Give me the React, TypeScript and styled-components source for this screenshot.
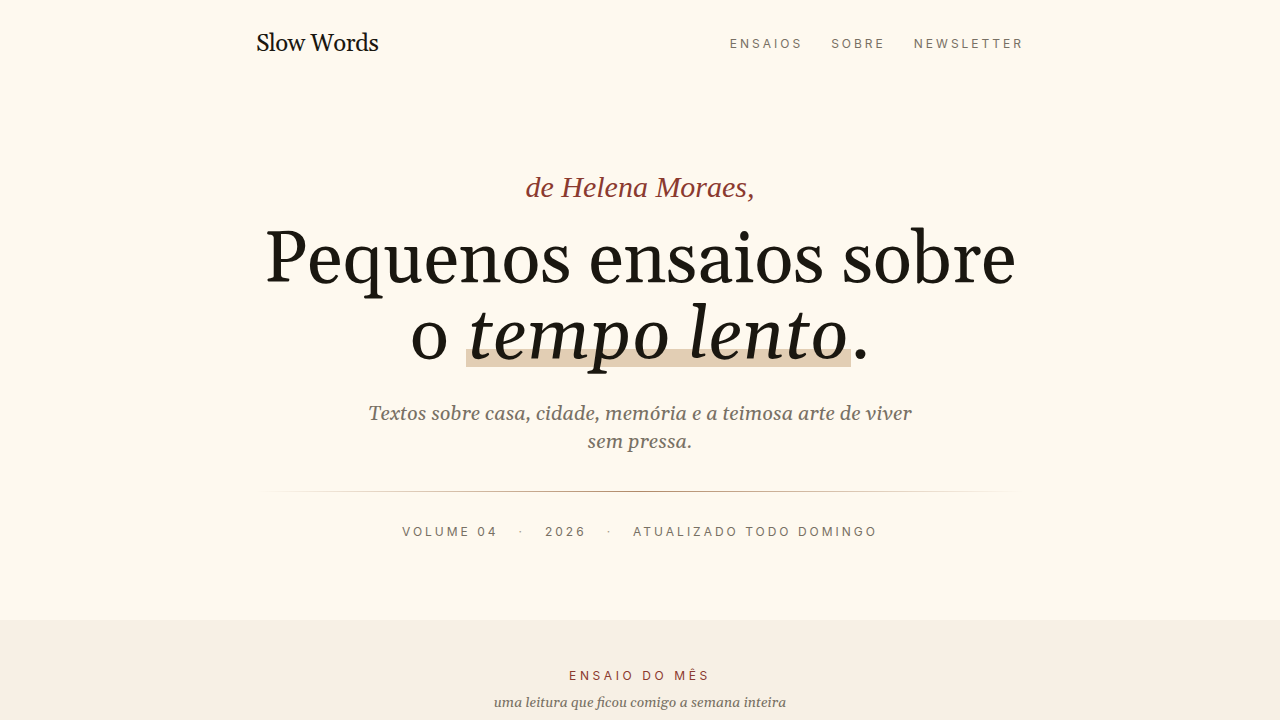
import React from 'react';
import styled, { createGlobalStyle } from 'styled-components';

const serif = `Georgia, Gelasio, "Liberation Serif", serif`;
const sans = `Inter, "Liberation Sans", sans-serif`;
const ink = '#1a1710';
const muted = '#787064';
const accent = '#8b3a2f';

const GlobalStyle = createGlobalStyle`
  * { box-sizing: border-box; }
  body { margin: 0; background: #fef9ef; color: ${ink}; font-family: ${serif}; }
`;

const Header = styled.header`
  display: flex;
  justify-content: space-between;
  align-items: center;
  max-width: 768px;
  margin: 0 auto;
  padding: 28px 0;
`;

const Brand = styled.a`
  font-size: 24px;
  line-height: 32px;
  letter-spacing: -0.02em;
  color: ${ink};
  text-decoration: none;
`;

const Nav = styled.nav`
  display: flex;
  gap: 28px;
`;

const NavLink = styled.a`
  font: 400 12px/16px ${sans};
  letter-spacing: 0.25em;
  text-transform: uppercase;
  color: ${muted};
  text-decoration: none;
`;

const Hero = styled.section`
  max-width: 768px;
  margin: 0 auto;
  padding: 75px 0 80px;
  text-align: center;
`;

const Byline = styled.p`
  margin: 0 0 12px;
  font: italic 400 30px/48px "Apple Chancery", "Zapf Chancery", "Liberation Serif", serif;
  color: ${accent};
`;

const Title = styled.h1`
  margin: 0;
  font-weight: 400;
  font-size: 72px;
  line-height: 76px;
`;

const Marked = styled.em`
  padding: 0 2px;
  background: linear-gradient(transparent 58px, #e2ceb4 58px, #e2ceb4 76px, transparent 76px);
`;

const Lead = styled.p`
  max-width: 576px;
  margin: 25px auto 35px;
  font-size: 20px;
  line-height: 28px;
  font-style: italic;
  color: ${muted};
`;

const Rule = styled.hr`
  height: 1px;
  margin: 0;
  border: 0;
  background: linear-gradient(90deg, transparent, #b08968, transparent);
`;

const Meta = styled.p`
  display: flex;
  justify-content: center;
  gap: 20px;
  margin: 32px 0 0;
  font: 400 12px/16px ${sans};
  letter-spacing: 0.25em;
  text-transform: uppercase;
  color: ${muted};
`;

const Dot = styled.span`
  color: #a89c8a;
`;

const Feature = styled.section`
  padding: 48px 24px;
  background: #f7f0e5;
  text-align: center;
`;

const FeatureTitle = styled.h2`
  margin: 0 0 8px;
  font: 400 12px/16px ${sans};
  letter-spacing: 0.3em;
  text-transform: uppercase;
  color: ${accent};
`;

const FeatureNote = styled.p`
  margin: 0;
  font-size: 14px;
  line-height: 22px;
  font-style: italic;
  color: ${muted};
`;

export default function App() {
  return (
    <>
      <GlobalStyle />
      <Header>
        <Brand href="#">Slow Words</Brand>
        <Nav>
          <NavLink href="#ensaios">Ensaios</NavLink>
          <NavLink href="#sobre">Sobre</NavLink>
          <NavLink href="#newsletter">Newsletter</NavLink>
        </Nav>
      </Header>
      <main>
        <Hero>
          <Byline>de Helena Moraes,</Byline>
          <Title>Pequenos ensaios sobre o <Marked>tempo lento</Marked>.</Title>
          <Lead>Textos sobre casa, cidade, memória e a teimosa arte de viver sem pressa.</Lead>
          <Rule />
          <Meta><span>Volume 04</span><Dot>·</Dot><span>2026</span><Dot>·</Dot><span>Atualizado todo domingo</span></Meta>
        </Hero>
        <Feature id="ensaios">
          <FeatureTitle>Ensaio do mês</FeatureTitle>
          <FeatureNote>uma leitura que ficou comigo a semana inteira</FeatureNote>
        </Feature>
      </main>
    </>
  );
}
